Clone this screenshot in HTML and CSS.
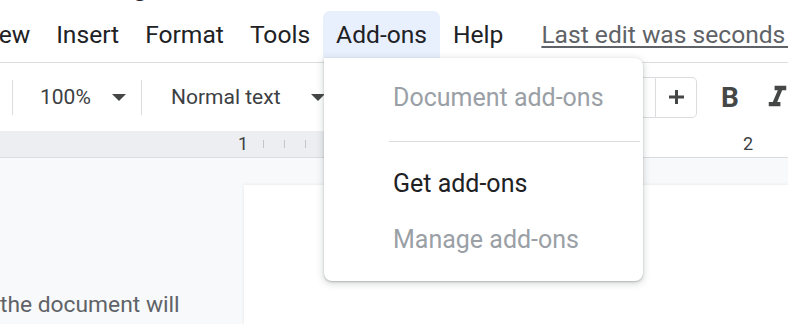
FILE: index.html
```html
<!DOCTYPE html>
<html lang="en">
<head>
    <meta charset="UTF-8">
    <title>Add-ons menu</title>
    <link rel="stylesheet" href="styles.css">
</head>
<body>
    <div class="app">
        <div class="title-row">
            <span class="doc-title">Meeting</span>
        </div>

        <div class="menubar">
            <span class="menu-item menu-cut">View</span>
            <span class="menu-item">Insert</span>
            <span class="menu-item">Format</span>
            <span class="menu-item">Tools</span>
            <span class="menu-item active">Add-ons</span>
            <span class="menu-item">Help</span>
            <a class="last-edit">Last edit was seconds ago</a>
        </div>

        <div class="toolbar">
            <span class="tb-sep first"></span>
            <div class="tb-select zoom">
                <span>100%</span>
                <span class="caret"></span>
            </div>
            <span class="tb-sep second"></span>
            <div class="tb-select style">
                <span>Normal text</span>
                <span class="caret"></span>
            </div>
            <div class="size-group">
                <span class="size-input">11</span>
                <span class="size-plus">
                    <svg width="15" height="14" viewBox="0 0 15 14">
                        <rect x="6" y="0" width="3" height="14" fill="#444746"/>
                        <rect x="0" y="5.5" width="15" height="3" fill="#444746"/>
                    </svg>
                </span>
            </div>
            <span class="tb-btn bold">B</span>
            <span class="tb-btn italic">
                <svg width="35" height="35" viewBox="0 0 24 24">
                    <path d="M10 4v3h2.21l-3.42 8H6v3h8v-3h-2.21l3.42-8H18V4z" fill="#444746"/>
                </svg>
            </span>
        </div>

        <div class="ruler">
            <div class="ruler-scale">
                <span class="inch"><span class="num">1</span></span>
                <span class="inch"><span class="num on-page">2</span></span>
            </div>
        </div>

        <div class="canvas">
            <div class="outline">
                <p class="outline-note">the document will</p>
            </div>
            <div class="page"></div>
        </div>

        <div class="dropdown">
            <div class="dd-item disabled">Document add-ons</div>
            <div class="dd-sep"></div>
            <div class="dd-item">Get add-ons</div>
            <div class="dd-item disabled">Manage add-ons</div>
        </div>
    </div>
</body>
</html>
```

FILE: styles.css
```css
* {
    box-sizing: border-box;
}

body {
    margin: 0;
    font-family: Roboto, "Noto Sans", sans-serif;
    color: #202124;
    background: #fff;
    overflow: hidden;
}

.app {
    position: relative;
    width: 788px;
    height: 324px;
    overflow: hidden;
}

/* document title, only the descender shows */
.title-row {
    height: 11px;
    overflow: hidden;
    white-space: nowrap;
}

.doc-title {
    display: block;
    padding-left: 40px;
    font-size: 30px;
    line-height: 30px;
    margin-top: -30px;
}

/* menu bar */
.menubar {
    display: flex;
    align-items: stretch;
    height: 47px;
    margin-left: -36px;
    white-space: nowrap;
}

.menu-item {
    flex-shrink: 0;
    padding: 0 13px;
    font-size: 24.6px;
    line-height: 47px;
    color: #202124;
}

.menu-item.active {
    background: #e8f0fe;
    border-radius: 7px 7px 0 0;
}

.last-edit {
    flex-shrink: 0;
    margin-left: 25px;
    font-size: 24.6px;
    line-height: 47px;
    color: #5f6368;
    text-decoration: underline;
    text-underline-offset: 3px;
}

/* toolbar */
.toolbar {
    display: flex;
    align-items: center;
    height: 69px;
    margin-top: 4px;
    border-top: 1px solid #dadce0;
    white-space: nowrap;
}

.toolbar > * {
    flex-shrink: 0;
}

.tb-sep {
    width: 1px;
    height: 35px;
    background: #dadce0;
}

.tb-sep.first {
    margin-left: 12px;
}

.tb-sep.second {
    margin-left: 15px;
}

.tb-select {
    display: flex;
    align-items: center;
    justify-content: space-between;
    font-size: 21px;
    color: #3c4043;
}

.tb-select.zoom {
    width: 86px;
    margin-left: 27px;
}

.tb-select.style {
    width: 154px;
    margin-left: 29px;
}

.caret {
    width: 0;
    height: 0;
    border-left: 7px solid transparent;
    border-right: 7px solid transparent;
    border-top: 7px solid #444746;
}

.size-group {
    display: flex;
    margin-left: 275px;
    height: 41px;
}

.size-input {
    width: 56px;
    border: 1px solid #dadce0;
    border-radius: 5px 0 0 5px;
    font-size: 21px;
    line-height: 39px;
    text-align: center;
    color: #3c4043;
}

.size-plus {
    display: flex;
    align-items: center;
    justify-content: center;
    width: 41px;
    border: 1px solid #dadce0;
    border-left: none;
    border-radius: 0 5px 5px 0;
}

.tb-btn {
    display: flex;
    align-items: center;
    justify-content: center;
    width: 40px;
    height: 40px;
}

.tb-btn.bold {
    margin-left: 13px;
    font-size: 28px;
    font-weight: 700;
    color: #444746;
}

.tb-btn.italic {
    margin-left: 7px;
}

/* ruler */
.ruler {
    height: 27px;
    border-bottom: 1px solid #dadce0;
    background-color: #eceef1;
    background-image:
        linear-gradient(to right, transparent 380px, #fff 380px),
        repeating-linear-gradient(to right, transparent 0, transparent 20px, #c4c7c5 20px, #c4c7c5 21px);
    background-size: 100% 100%, calc(100% - 243px) 8px;
    background-position: 0 0, 243px 9px;
    background-repeat: no-repeat, no-repeat;
}

.ruler-scale {
    display: flex;
    padding-left: 237px;
}

.inch {
    flex-shrink: 0;
    width: 505px;
    font-size: 18px;
    line-height: 26px;
    color: #3c4043;
}

.num {
    display: inline-block;
    padding: 0 1px;
    background: #eceef1;
}

.num.on-page {
    background: #fff;
}

/* page area */
.canvas {
    display: flex;
    height: 166px;
    background: #f8f9fa;
}

.outline {
    width: 244px;
    display: flex;
    align-items: flex-end;
}

.outline-note {
    margin: 0 0 4px;
    font-size: 22.8px;
    line-height: 30px;
    color: #5f6368;
    white-space: nowrap;
}

.page {
    flex: 1;
    margin-top: 27px;
    background: #fff;
    box-shadow: 0 0 3px rgba(60, 64, 67, 0.12);
}

/* add-ons dropdown, sits over the page */
.dropdown {
    position: absolute;
    top: 58px;
    left: 324px;
    width: 319px;
    height: 223px;
    padding-top: 12px;
    background: #fff;
    border-radius: 0 8px 8px 8px;
    box-shadow: 0 2px 6px 2px rgba(60, 64, 67, 0.15), 0 1px 2px rgba(60, 64, 67, 0.3);
}

.dd-item {
    padding-left: 69px;
    font-size: 25px;
    line-height: 56px;
    color: #202124;
}

.dd-item.disabled {
    color: #9aa0a6;
}

.dd-sep {
    height: 1px;
    margin: 15px 3px 14px 65px;
    background: #dadce0;
}
```
